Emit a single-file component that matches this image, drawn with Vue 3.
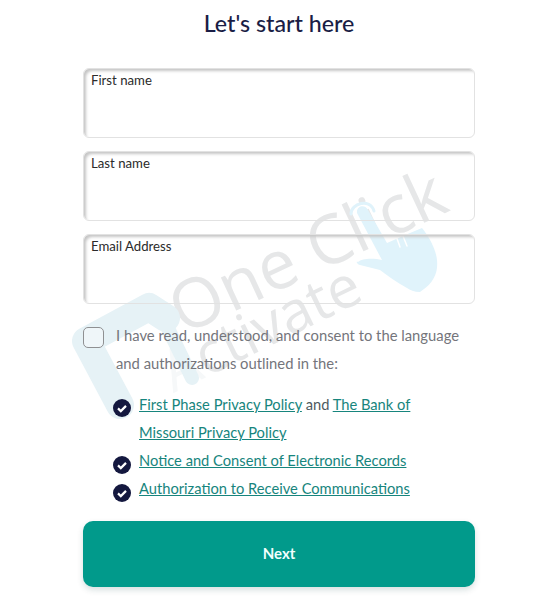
<script setup>
const fields = ['First name', 'Last name', 'Email Address']
</script>

<template>
  <main class="page">
    <div class="watermark" aria-hidden="true">
      <span class="wm one">One Click</span>
      <span class="wm two"><span class="faint">A</span>ctivate</span>
      <svg class="mark" viewBox="0 0 540 600">
        <path d="M120 405 L86 341 L149 307 L166 318" stroke="#e6f2f6" stroke-width="28" stroke-linecap="round" stroke-linejoin="round" fill="none"/>
        <path d="M165 322 L192 378" stroke="#e6f2f6" stroke-width="14" stroke-linecap="round" fill="none"/>
        <path d="M357 213 C356 205 366 204 368 210 L387 243 L410 233 L422 228 C430 238 436 250 437 260 C438 270 436 282 420 292 C414 292 410 290 407 288 C396 282 388 276 380 270 L360 265 C356 264 356 260 358 262 C362 258 374 258 382 260 Z" fill="#e0f3fb"/>
        <path d="M351 214 C351 203 370 198 374 211" stroke="#e0f3fb" stroke-width="3" stroke-linecap="round" fill="none"/>
        <path d="M395 233 L400 247 M403 236 L407 246" stroke="#fff" stroke-width="1.5" stroke-linecap="round"/>
      </svg>
    </div>

    <div class="form">
      <h1 class="title">Let's start here</h1>
      <div class="fields">
        <div v-for="f in fields" :key="f" class="field">{{ f }}</div>
      </div>
      <div class="consent">
        <span class="box"></span>
        <p class="consent-text">I have read, understood, and consent to the language and authorizations outlined in the:</p>
      </div>
      <ul class="links">
        <li>
          <svg class="tick" viewBox="0 0 18 18"><circle cx="9" cy="9" r="9" fill="#14183f"/><path d="M5 9.4l2.8 2.7L13 6.9" fill="none" stroke="#fff" stroke-width="2.2"/></svg>
          <span class="wrap"><a>First Phase Privacy Policy</a> and <a>The Bank of Missouri Privacy Policy</a></span>
        </li>
        <li>
          <svg class="tick" viewBox="0 0 18 18"><circle cx="9" cy="9" r="9" fill="#14183f"/><path d="M5 9.4l2.8 2.7L13 6.9" fill="none" stroke="#fff" stroke-width="2.2"/></svg>
          <span class="wrap"><a>Notice and Consent of Electronic Records</a></span>
        </li>
        <li>
          <svg class="tick" viewBox="0 0 18 18"><circle cx="9" cy="9" r="9" fill="#14183f"/><path d="M5 9.4l2.8 2.7L13 6.9" fill="none" stroke="#fff" stroke-width="2.2"/></svg>
          <span class="wrap"><a>Authorization to Receive Communications</a></span>
        </li>
      </ul>
      <button class="next">Next</button>
    </div>
  </main>
</template>

<style scoped>
.page {
  position: relative;
  width: 540px;
  height: 600px;
  background: #fff;
  overflow: hidden;
  font-family: Lato, "Open Sans", sans-serif;
}
.form {
  position: relative;
  box-sizing: border-box;
  height: 600px;
  padding: 9px 65px 0 83px;
}
.title {
  margin: 0;
  text-align: center;
  font-size: 23.2px;
  line-height: 28px;
  font-weight: 500;
  color: #1a1d45;
}
.fields {
  display: flex;
  flex-direction: column;
  gap: 13px;
  margin-top: 31px;
}
.field {
  height: 70px;
  box-sizing: border-box;
  padding: 3px 7px;
  border: 1px solid #e2e2e2;
  border-radius: 6px;
  box-shadow: inset 3px 3px 3px -1px #c6c6c6;
  font-size: 13.2px;
  line-height: 17px;
  color: #2b2b2b;
}
.consent {
  display: flex;
  gap: 12px;
  margin-top: 18px;
}
.box {
  flex: none;
  width: 21px;
  height: 21px;
  margin-top: 5px;
  box-sizing: border-box;
  border: 1px solid #8f9092;
  border-radius: 5px;
  background: rgba(255, 255, 255, 0.35);
}
.consent-text {
  margin: 0;
  font-size: 14.8px;
  line-height: 28px;
  margin-top: -1px;
  margin-bottom: 1px;
  color: #74757b;
}
.links {
  list-style: none;
  margin: 12px 0 0;
  padding: 0 0 0 30px;
}
.links li {
  display: flex;
  gap: 8px;
}
.tick {
  flex: none;
  width: 18px;
  height: 18px;
  margin-top: 9px;
}
.links li:nth-child(n+2) .tick {
  margin-top: 10px;
}
.wrap {
  font-size: 14.7px;
  line-height: 28px;
  color: #4f5a5f;
  max-width: 285px;
}
.wrap a {
  color: #17857d;
  text-decoration: underline;
}
.next {
  display: block;
  width: 100%;
  height: 66px;
  margin-top: 19px;
  padding-bottom: 4px;
  border: 0;
  border-radius: 10px;
  background: #019a8b;
  box-shadow: 0 3px 6px rgba(0, 60, 60, 0.16);
  color: #f2fffd;
  font: 700 15px Lato, "Open Sans", sans-serif;
}
.watermark {
  position: absolute;
  inset: 0;
  pointer-events: none;
}
.mark {
  position: absolute;
  inset: 0;
  width: 540px;
  height: 600px;
}
.wm {
  position: absolute;
  white-space: nowrap;
  color: #e6e7e8;
  font-family: "Open Sans", sans-serif;
  transform-origin: left bottom;
}
.faint {
  color: #f6f8f9;
}
.one {
  left: 189px;
  top: 268px;
  font-size: 68px;
  line-height: 80px;
  transform: rotate(-25deg);
}
.two {
  left: 179px;
  top: 335px;
  font-size: 58px;
  line-height: 70px;
  transform: rotate(-26deg);
}
</style>
